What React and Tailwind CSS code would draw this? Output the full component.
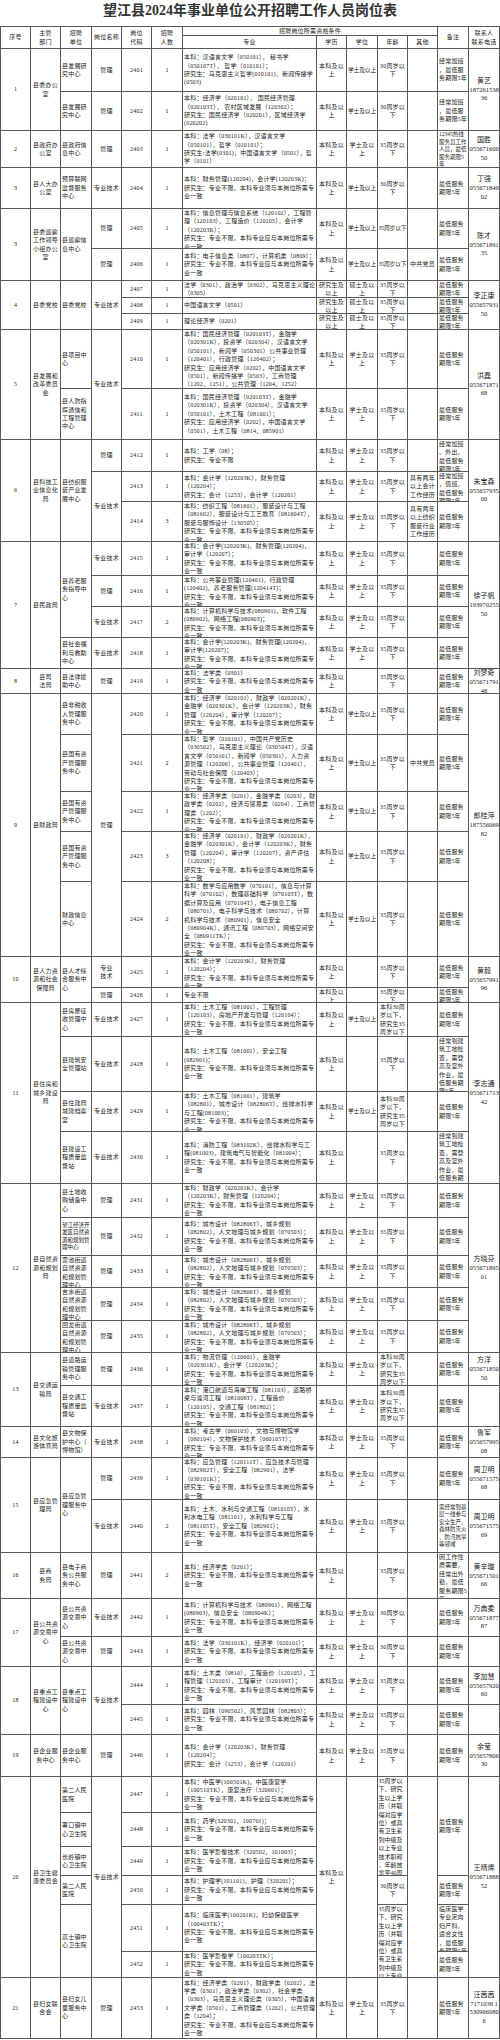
import React from "react";

const BK = "本科及以上";
const XS = "学士及以上";
const N35 = "35周岁以下";
const N30 = "30周岁以下";
const ZD = "最低服务期限5年";
const YJ = "研究生：专业不限，本科专业须与本岗位所需专业一致";
const YY = "研究生：专业不限，本科专业应与本岗位所需专业一致";
const AGE2 = "本科30周岁以下，研究生35周岁以下";
const AGE40 = "35周岁以下、研究生以上学历（并取得对应学位）或具有卫生系列中级及以上专业技术职称，年龄放宽至40周岁以下";
const PLAN = "本科：城市设计（082806T），城乡规划（082802），人文地理与城乡规划（070503）；\n" + YJ;
const JZ = "经常到建筑工地检查，需登高及室外作业，最低服务期限5年";

const rows = [
  // header
  [
    [1, "序号", 2, "h"], [2, "主管\n部门", 2, "h"], [3, "招聘\n单位", 2, "h"], [4, "岗位名称", 2, "h"], [5, "岗位\n代码", 2, "h"], [6, "招聘\n人数", 2, "h"],
    [7, "招聘岗位所需资格条件", 1, "h5"], [12, "备注", 2, "h"], [13, "联系人\n联系电话", 2, "h"],
  ],
  [[7, "专业", 1, "h"], [8, "学历", 1, "h"], [9, "学位", 1, "h"], [10, "年龄", 1, "h"], [11, "其他", 1, "h"]],
  // 2401
  [
    [1, "1", 2], [2, "县委办公室", 2], [3, "县发展研究中心"], [4, "管理"], [5, "2401"], [6, "1"],
    [7, "本科：汉语言文学（050101）， 秘书学（050107T）， 哲学（010101）；\n研究生：马克思主义哲学(010101)，新闻传播学(0503)"],
    [8, BK], [9, XS, 1, "n"], [10, N30], [11, ""], [12, "经常加班，最低服务期限5年"], [13, "黄艺|18726153836", 2],
  ],
  [
    [3, "县发展研究中心"], [4, "管理"], [5, "2402"], [6, "1"],
    [7, "本科：经济学（020101）， 国民经济管理（020103T）， 农村区域发展（120302）；\n研究生：国民经济学（020201），区域经济学(020202)"],
    [8, BK], [9, XS, 1, "n"], [10, N30], [11, ""], [12, "经常加班，最低服务期限5年"],
  ],
  [
    [1, "2"], [2, "县政府办公室"], [3, "县政府信息中心"], [4, "管理"], [5, "2403"], [6, "1"],
    [7, "本科：法学（030101K），汉语言文学（050101），哲学（010101）；\n研究生:法学(0301)，中国语言文学（0501），哲学（0101）"],
    [8, BK], [9, XS], [10, N35], [11, ""], [12, "12345热线服务员工作人员，最低服务期限5年", 1, "s"], [13, "国胜|05567160050"],
  ],
  [
    [1, "3"], [2, "县人大办公室"], [3, "预算联网监督服务中心"], [4, "专业技术"], [5, "2404"], [6, "1"],
    [7, "本科：财务管理(120204)，会计学(120203K)；\n研究生：专业不限，本科专业须与本岗位所需专业一致"],
    [8, BK], [9, XS, 1, "n"], [10, N30], [11, ""], [12, ZD], [13, "丁强|05567184902"],
  ],
  [
    [1, "3", 2], [2, "县委巡察工作领导小组办公室", 2], [3, "县巡察信息中心", 2], [4, "管理"], [5, "2405"], [6, "1"],
    [7, "本科：信息管理与信息系统（120102），工程管理（120103），工程造价（120105），会计学（120203K）；\n" + YY],
    [8, BK], [9, XS, 1, "n"], [10, N35, 1, "n"], [11, ""], [12, ZD], [13, "陈才|05567189135", 2],
  ],
  [
    [4, "管理"], [5, "2406"], [6, "1"],
    [7, "本科：电子信息类（0807），计算机类（0809）；\n" + YY],
    [8, BK], [9, XS, 1, "n"], [10, N35, 1, "n"], [11, "中共党员"], [12, ZD],
  ],
  [
    [1, "4", 3], [2, "县委党校", 3], [3, "县委党校", 3], [4, "专业技术", 3], [5, "2407"], [6, "1"],
    [7, "法学（0301），政治学（0302），马克思主义理论（0305）"],
    [8, "研究生及以上"], [9, "硕士及以上"], [10, N35], [11, ""], [12, ZD], [13, "李正康|05565793150", 3],
  ],
  [[5, "2408"], [6, "1"], [7, "中国语言文学（0501）"], [8, "研究生及以上"], [9, "硕士及以上"], [10, N35], [11, ""], [12, ZD]],
  [[5, "2409"], [6, "1"], [7, "理论经济学（0201）"], [8, "研究生及以上"], [9, "硕士及以上"], [10, N35], [11, ""], [12, ZD]],
  [
    [1, "5", 2], [2, "县发展和改革委员会", 2], [3, "县项目中心"], [4, "专业技术", 2], [5, "2410"], [6, "1"],
    [7, "本科：国民经济管理（020103T），金融学（020301K），投资学（020304），汉语言文学（050101），新闻学（050301）公共事业管理（120401），行政管理（120402）；\n研究生：应用经济学（0202），中国语言文学（0501），新闻传播学（0503），工商管理（1202、1251），公共管理（1204、1252）"],
    [8, BK], [9, XS], [10, N35], [11, ""], [12, ZD], [13, "洪磊|05567187168", 2],
  ],
  [
    [3, "县人防指挥通信和工程管理中心"], [5, "2411"], [6, "1"],
    [7, "本科：国民经济管理（020103T），金融学（020301K），投资学（020304），汉语言文学（050101），土木工程（081001）；\n研究生：应用经济学（0202），中国语言文学（0501），土木工程（0814、085901）"],
    [8, BK], [9, XS], [10, N35], [11, ""], [12, ZD],
  ],
  [
    [1, "6", 3], [2, "县科技工业信息化局", 3], [3, "县纺织服装产业发展中心", 3], [4, "管理"], [5, "2412"], [6, "1"],
    [7, "本科：工学（08）；\n研究生：专业不限"],
    [8, BK], [9, XS], [10, N35], [11, ""], [12, "经常加班、外出，最低服务期限5年"], [13, "朱宝森|05565793500", 3],
  ],
  [
    [4, "专业技术", 2], [5, "2413"], [6, "1"],
    [7, "本科：会计学（120203K），财务管理（120204）；\n研究生：会计（1253），会计学（120201）"],
    [8, BK], [9, XS], [10, N35], [11, "具有两年以上会计工作经历"], [12, "经常加班，值班，最低服务期限5年"],
  ],
  [
    [5, "2414"], [6, "3"],
    [7, "本科：纺织工程（081601），服装设计与工程（081602），服装设计与工艺教育（081604T），服装与服饰设计（130505）；\n" + YJ],
    [8, BK], [9, XS], [10, N35], [11, "具有两年以上纺织服装行业工作经历"], [12, ZD],
  ],
  [
    [1, "7", 4], [2, "县民政局", 4], [3, "县养老服务指导中心", 3], [4, "专业技术"], [5, "2415"], [6, "1"],
    [7, "本科：会计学(120203K)，财务管理(120204)，审计学（120207）；\n" + YJ],
    [8, BK], [9, XS], [10, N35], [11, ""], [12, ZD], [13, "徐子帆|19397025550", 4],
  ],
  [
    [4, "管理"], [5, "2416"], [6, "1"],
    [7, "本科：公共事业管理(120401)，行政管理(120402)，养老服务管理(120414T)；\n" + YJ],
    [8, BK], [9, XS], [10, N35], [11, ""], [12, ZD],
  ],
  [
    [4, "专业技术"], [5, "2417"], [6, "2"],
    [7, "本科：计算机科学与技术(080901)，软件工程(080902)，网络工程(080903)；\n" + YJ],
    [8, BK], [9, XS], [10, N35], [11, ""], [12, ZD],
  ],
  [
    [3, "县社会福利与救助中心"], [4, "专业技术"], [5, "2418"], [6, "1"],
    [7, "本科：会计学(120203K)，财务管理(120204)，审计学(120207)；\n" + YJ],
    [8, BK], [9, XS], [10, N35], [11, ""], [12, ZD],
  ],
  [
    [1, "8"], [2, "县司\n法局"], [3, "县法律援助中心"], [4, "管理"], [5, "2419"], [6, "1"],
    [7, "本科：法学类（0301）\n" + YJ],
    [8, BK], [9, ""], [10, N35], [11, ""], [12, ZD], [13, "刘梦奇|05567179148"],
  ],
  [
    [1, "9", 5], [2, "县财政局", 5], [3, "县非税收入管理服务中心"], [4, "管理", 5], [5, "2420"], [6, "1"],
    [7, "本科：经济学（020101），财政学（020201K），金融学（020301K），会计学（120203K），财务管理（120204），审计学（120207）；\n" + YJ],
    [8, BK], [9, XS, 1, "n"], [10, N35], [11, ""], [12, ZD], [13, "郎桂萍|18755606982", 5],
  ],
  [
    [3, "县国有资产管理服务中心"], [5, "2421"], [6, "2"],
    [7, "本科：哲学（010101），中国共产党历史（030502），马克思主义理论（030504T），汉语言文学（050101），新闻学（050301），人力资源管理（120206），公共事业管理（120401），劳动与社会保障（120403）；\n" + YJ],
    [8, BK], [9, XS, 1, "n"], [10, N35], [11, "中共党员"], [12, ZD],
  ],
  [
    [3, "县国有资产管理服务中心"], [5, "2422"], [6, "1"],
    [7, "本科：经济学类（0201），金融学类（0203），财政学类（0202），经济与贸易类（0204），工商管理类（1202）；\n" + YJ],
    [8, BK], [9, XS, 1, "n"], [10, N35], [11, ""], [12, ZD],
  ],
  [
    [3, "县国有资产管理服务中心"], [5, "2423"], [6, "3"],
    [7, "本科：经济学（020101），财政学（020201K），金融学（020301K），会计学（120203K），财务管理（120204），审计学（120207），资产评估（120208）；\n" + YJ],
    [8, BK], [9, XS, 1, "n"], [10, N35], [11, ""], [12, ZD],
  ],
  [
    [3, "财政信息中心"], [5, "2424"], [6, "2"],
    [7, "本科：数学与应用数学（070101），信息与计算科学（070102），数理基础科学（070103T），数据计算及应用（070104T），电子信息工程（080701），电子科学与技术（080702），计算机科学与技术（080901），信息安全（080904K），通讯工程（080703），网络空间安全（080911TK）；\n" + YJ],
    [8, BK], [9, XS, 1, "n"], [10, N35], [11, ""], [12, ZD],
  ],
  [
    [1, "10", 2], [2, "县人力资源和社会保障局", 2], [3, "县人才综合服务中心", 2], [4, "专业\n技术"], [5, "2425"], [6, "1"],
    [7, "本科：会计学（120203K），财务管理（120204）；\n" + YJ],
    [8, BK], [9, ""], [10, N35], [11, ""], [12, ZD], [13, "黄毅|05565799196", 2],
  ],
  [[4, "管理"], [5, "2426"], [6, "1"], [7, "专业不限"], [8, BK], [9, ""], [10, N35], [11, ""], [12, ZD]],
  [
    [1, "11", 4], [2, "县住房和城乡建设局", 4], [3, "县房屋征收管理中心"], [4, "专业技术"], [5, "2427"], [6, "1"],
    [7, "本科：土木工程（081001），工程管理（120103），房地产开发与管理（120104）；\n" + YJ],
    [8, BK], [9, XS, 1, "n"], [10, AGE2], [11, ""], [12, ZD], [13, "李志通|05567171342", 4],
  ],
  [
    [3, "县建筑安全管理站"], [4, "专业技术"], [5, "2428"], [6, "1"],
    [7, "本科：土木工程（081001），安全工程(082901)；\n" + YJ],
    [8, BK], [9, ""], [10, N35], [11, ""], [12, JZ],
  ],
  [
    [3, "县住建局城建档案室"], [4, "专业技术"], [5, "2429"], [6, "1"],
    [7, "本科：土木工程（081001），建筑学（082801），城市设计（082806T），给排水科学与工程(081003)；\n" + YJ],
    [8, BK], [9, XS, 1, "n"], [10, AGE2], [11, ""], [12, ZD],
  ],
  [
    [3, "县建设工程质量监督站"], [4, "专业技术"], [5, "2430"], [6, "1"],
    [7, "本科：消防工程（083102K），给排水科学与工程(081003)，建筑电气与智能化（081004）；\n" + YJ],
    [8, BK], [9, ""], [10, N35], [11, ""], [12, JZ],
  ],
  [
    [1, "12", 5], [2, "县自然资源和规划局", 5], [3, "县土地收购储备中心"], [4, "管理"], [5, "2431"], [6, "1"],
    [7, "本科：财政学（020201K），会计学（120203K），财务管理（120204）；\n" + YJ],
    [8, BK], [9, XS], [10, N35], [11, ""], [12, ZD], [13, "方晓芬|05567189501", 5],
  ],
  [[3, "望江经济开发区自然资源和规划管理中心", 1, "s"], [4, "管理"], [5, "2432"], [6, "1"], [7, PLAN], [8, BK], [9, XS], [10, N35], [11, ""], [12, ZD]],
  [[3, "雷池街道自然资源和规划管理中心"], [4, "管理"], [5, "2433"], [6, "1"], [7, PLAN], [8, BK], [9, XS], [10, N35], [11, ""], [12, ZD]],
  [[3, "吉水街道自然资源和规划管理中心"], [4, "管理"], [5, "2434"], [6, "1"], [7, PLAN], [8, BK], [9, XS], [10, N35], [11, ""], [12, ZD]],
  [[3, "回龙街道自然资源和规划管理中心"], [4, "管理"], [5, "2435"], [6, "1"], [7, PLAN], [8, BK], [9, XS], [10, N35], [11, ""], [12, ZD]],
  [
    [1, "13", 2], [2, "县交通运输局", 2], [3, "县道路运输管理服务中心"], [4, "管理"], [5, "2436"], [6, "1"],
    [7, "本科：物流管理（120601），金融学（020301K），会计学（120203K）；\n" + YJ],
    [8, BK], [9, XS], [10, AGE2], [11, ""], [12, ZD], [13, "方洋|05567185050"],
  ],
  [
    [3, "县交通工程质量监督站"], [4, "专业技术"], [5, "2437"], [6, "1"],
    [7, "本科：港口航道与海岸工程（081103），道路桥梁与渡河工程（081006T），工程造价（120105），交通工程（081802）；\n" + YJ],
    [8, BK], [9, XS], [10, AGE2], [11, ""], [12, ZD], [13, ""],
  ],
  [
    [1, "14"], [2, "县文化旅游体育局"], [3, "县文物保护中心（博物馆）"], [4, "专业技术"], [5, "2438"], [6, "1"],
    [7, "本科：考古学（060103），文物与博物馆学（060104），文物保护技术（060105T）；\n" + YJ],
    [8, BK], [9, XS], [10, N35], [11, ""], [12, ZD], [13, "鲁军|05565799508"],
  ],
  [
    [1, "15", 2], [2, "县应急管理局", 2], [3, "县应急管理服务中心", 2], [4, "管理"], [5, "2439"], [6, "1"],
    [7, "本科：应急管理（120111T），应急技术与管理（082902T），安全工程（082901），法学（030101K）；\n" + YJ],
    [8, BK], [9, XS], [10, N35], [11, ""], [12, ZD], [13, "周卫明|05567157568"],
  ],
  [
    [4, "专业技术"], [5, "2440"], [6, "2"],
    [7, "本科：土木、水利与交通工程（081010T），水利水电工程（081101），水利科学与工程（081105T），安全工程（082901）；\n" + YJ],
    [8, BK], [9, XS], [10, N35], [11, ""], [12, "需经常到基层一线参与安全生产、森林防灭火、防汛抗旱等领域", 1, "s"], [13, "周卫明|05567157569"],
  ],
  [
    [1, "16"], [2, "县商\n务局"], [3, "县电子商务公共服务中心"], [4, "管理"], [5, "2441"], [6, "2"],
    [7, "本科：经济学类（0201）；\n" + YJ],
    [8, BK], [9, ""], [10, N35], [11, ""], [12, "因工作性质需要，经常出外勤，最低服务期限5年"], [13, "黄辛璇|05567150166"],
  ],
  [
    [1, "17", 2], [2, "县公共资源交易中心", 2], [3, "县公共资源交易中心"], [4, "专业技术"], [5, "2442"], [6, "1"],
    [7, "本科：计算机科学与技术（080901），网络工程(080903)，信息安全（080904K）；\n" + YJ],
    [8, BK], [9, XS], [10, N30], [11, ""], [12, ZD], [13, "万典柔|05567187787"],
  ],
  [
    [3, "县公共资源交易中心"], [4, "管理"], [5, "2443"], [6, "1"],
    [7, "本科：法学（030101K），经济学（020101）；\n" + YJ],
    [8, BK], [9, XS], [10, N30], [11, ""], [12, ZD], [13, ""],
  ],
  [
    [1, "18", 2], [2, "县重点工程建设中心", 2], [3, "县重点工程建设中心", 2], [4, "专业技术", 2], [5, "2444"], [6, "1"],
    [7, "本科：土木类（0810），工程造价（120105），工程管理（120103），工程审计（120109T）；\n" + YJ],
    [8, BK], [9, XS], [10, N35], [11, ""], [12, ZD], [13, "李加慧|05565792060"],
  ],
  [
    [5, "2445"], [6, "1"],
    [7, "本科：园林（090502），风景园林（082803）；\n" + YJ],
    [8, BK], [9, XS], [10, N35], [11, ""], [12, ZD], [13, ""],
  ],
  [
    [1, "19"], [2, "县企业服务中心"], [3, "县企业服务中心"], [4, "管理"], [5, "2446"], [6, "1"],
    [7, "本科：会计学（120203K），财务管理（120204）；\n研究生：会计（1253），会计学（120201）"],
    [8, BK], [9, XS], [10, N35], [11, ""], [12, ZD], [13, "余莹|05565780630"],
  ],
  [
    [1, "20", 6], [2, "县卫生健康委员会", 6], [3, "第二人民医院"], [4, "专业技术", 6], [5, "2447"], [6, "1"],
    [7, "本科：中医学(100501K)，中医康复学（100510TK），康复治疗（320601）；\n" + YY],
    [8, BK, 6], [9, "", 6], [10, AGE40, 3, "t"], [11, "", 6], [12, ZD, 3], [13, "王晴烯|05567188852", 6],
  ],
  [[3, "寨口镇中心卫生院"], [5, "2448"], [6, "1"], [7, "本科：药学(320301、100701)；\n" + YY]],
  [[3, "长岭镇中心卫生院"], [5, "2449"], [6, "1"], [7, "本科：医学影像技术（320502、101003）；\n" + YY]],
  [[3, "第二人民医院"], [5, "2450"], [6, "1"], [7, "本科：护理学(101101)，护理（320201）；\n" + YY], [10, N30], [12, ZD]],
  [
    [3, "高士镇中心卫生院", 2], [5, "2451"], [6, "1"],
    [7, "本科：临床医学(100201K)，妇幼保健医学（100403TK）；\n" + YY],
    [10, AGE40, 2, "t"], [12, "临床医学专业定向妇产科，适合女性，最低服务期限5年"],
  ],
  [[5, "2452"], [6, "1"], [7, "本科：医学影像学（100203TK）；\n" + YY], [12, ZD]],
  [
    [1, "21"], [2, "县妇女联合会"], [3, "县妇女儿童服务中心"], [4, "管理"], [5, "2453"], [6, "1"],
    [7, "本科：经济学类（0201），财政学类（0202），法学类（0301），政治学类（0302），社会学类（0303），马克思主义理论类（0305），中国语言文学类（0501），工商管理类（1202），公共管理类（1204）；\n" + YY],
    [8, BK], [9, XS], [10, N35], [11, ""], [12, ZD], [13, "汪茜茜|7171038 15309660806"],
  ],
];

const COL = ["", "col-start-1", "col-start-2", "col-start-3", "col-start-4", "col-start-5", "col-start-6", "col-start-7", "col-start-8", "col-start-9", "col-start-10", "col-start-11", "col-start-12", "col-start-13"];
const RS = ["", "row-span-1", "row-span-2", "row-span-3", "row-span-4", "row-span-5", "row-span-6"];

const ALIGN = {
  1: "text-center",
  2: "text-center px-[1px]",
  3: "text-left pl-[1px] [line-break:anywhere]",
  4: "text-center",
  5: "text-center",
  6: "text-center",
  7: "text-left pl-[1px] pr-[0.5px]",
  8: "text-center px-[1px]",
  9: "text-center px-[0.5px]",
  10: "text-center px-[0.5px]",
  11: "text-center px-[1px]",
  12: "text-left px-[1px] [line-break:anywhere]",
  13: "text-center",
};

function Cell({ c, t, rs, f }) {
  const span = f === "h5" ? "col-span-5" : "";
  const base = `${COL[c]} ${RS[rs]} ${span} flex [align-items:safe_center] overflow-hidden border-r border-b border-[#5a5a5a]`;
  if (c === 13 && t.includes("|")) {
    const [name, phone] = t.split("|");
    return (
      <div className={base}>
        <div className="w-full text-center">
          <div className="text-[7px] leading-[9px] tracking-normal">{name}</div>
          <div className="text-[6.5px] leading-[8.5px] tracking-normal break-all">{phone}</div>
        </div>
      </div>
    );
  }
  let inner = `w-full whitespace-pre-line ${ALIGN[c]}`;
  if (f === "h" || f === "h5") inner = "w-full whitespace-pre-line text-center";
  if (f === "n") inner = "w-full text-center whitespace-nowrap text-[5.8px] tracking-[-0.2px]";
  if (f === "s") inner = `w-full whitespace-pre-line ${ALIGN[c]} text-[5.5px] leading-[7.5px] tracking-normal`;
  if (f === "t") inner = "w-full text-left px-[0.5px] whitespace-pre-line tracking-normal [line-break:anywhere]";
  return (
    <div className={base}>
      <div className={inner}>{t}</div>
    </div>
  );
}

export default function App() {
  const cells = [];
  rows.forEach((r, i) =>
    r.forEach((cell, j) => {
      const [c, t, rs = 1, f] = cell;
      cells.push(<Cell key={`${i}-${j}`} c={c} t={t} rs={rs} f={f} />);
    })
  );
  return (
    <div className="w-[500px] h-[2040px] bg-white overflow-hidden text-[#222] font-['Liberation_Serif','Noto_Sans_CJK_SC',serif]">
      <div className="h-[26px] pt-[2px] text-center text-[14px] leading-[17px] font-bold text-[#333]">
        望江县2024年事业单位公开招聘工作人员岗位表
      </div>
      <div className="grid w-[500px] grid-cols-[30px_30px_31px_30px_30px_31px_134px_30px_31px_30px_30px_31px_31px] grid-rows-[9px_13px_43px_39px_37px_41px_40px_32px_17px_16px_16px_59px_51px_32px_30px_40px_34px_31px_31px_31px_25px_41px_57px_40px_50px_75px_31px_15px_34px_55px_40px_52px_34px_38px_32px_33px_32px_33px_41px_31px_42px_53px_46px_38px_30px_38px_30px_42px_36px_34px_29px_29px_47px_26px_61px] border-l border-t border-[#5a5a5a] text-[6px] leading-[8.4px] tracking-[0.2px]">
        {cells}
      </div>
    </div>
  );
}
